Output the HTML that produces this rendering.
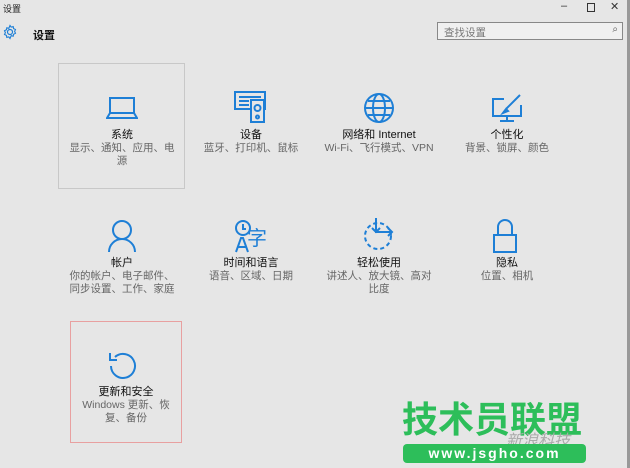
<!DOCTYPE html>
<html><head><meta charset="utf-8"><style>
body{margin:0;width:630px;height:468px;background:#e6e6e6;font-family:"Liberation Sans","Noto Sans CJK SC",sans-serif;position:relative;overflow:hidden}
.a{position:absolute}
.t{position:absolute;width:128px;text-align:center;font-size:10.5px;line-height:13px;color:#666}
.t b{display:block;color:#111;font-weight:normal;font-size:11px}
svg.i{position:absolute;fill:none;stroke:#1e7fd6;stroke-width:2}
</style></head><body>
<div class="a" style="left:3px;top:2px;font-size:9px;color:#222">设置</div>
<div class="a" style="left:561px;top:0;font-size:11px;color:#333">–</div>
<div class="a" style="left:587px;top:3px;width:6px;height:7px;border:1px solid #333"></div>
<div class="a" style="left:610px;top:0;font-size:11px;color:#333">✕</div>
<svg class="a" style="left:2px;top:24px" width="16" height="16" viewBox="0 0 16 16"><circle cx="8" cy="8" r="2.5" fill="none" stroke="#1e7fd6" stroke-width="1.2"/><path d="M8 1.5l1.2 1.6 2-.5.4 2 1.9.9-.9 1.9.9 1.9-1.9.9-.4 2-2-.5L8 14.5l-1.2-1.6-2 .5-.4-2-1.9-.9.9-1.9-.9-1.9 1.9-.9.4-2 2 .5z" fill="none" stroke="#1e7fd6" stroke-width="1.1"/></svg>
<div class="a" style="left:33px;top:27px;font-size:11px;font-weight:bold;color:#111">设置</div>
<div class="a" style="left:437px;top:22px;width:186px;height:18px;border:1px solid #888;background:#f0f0f0;box-sizing:border-box"><span style="position:absolute;left:6px;top:2px;font-size:10.5px;color:#777">查找设置</span><span style="position:absolute;right:4px;top:1px;font-size:10px;color:#555">⌕</span></div>

<div class="a" style="left:58px;top:63px;width:127px;height:126px;border:1px solid #c8c8c8;box-sizing:border-box"></div>
<div class="a" style="left:70px;top:321px;width:112px;height:122px;border:1px solid #e8a0a0;box-sizing:border-box"></div>

<svg class="i" style="left:106px;top:96px" width="32" height="24"><rect x="4" y="2" width="24" height="15"/><path d="M1 22h30l-3-5H4z"/></svg>
<svg class="i" style="left:234px;top:91px" width="34" height="32" stroke-width="1.6"><rect x="1" y="1" width="30" height="17"/><path d="M5 6h22M5 10h10M5 14h10"/><rect x="17" y="9" width="13" height="22" fill="#e6e6e6"/><circle cx="23.5" cy="17" r="3"/><circle cx="23.5" cy="26" r="1.5"/></svg>
<svg class="i" style="left:363px;top:92px" width="32" height="32"><circle cx="16" cy="16" r="14"/><ellipse cx="16" cy="16" rx="6" ry="14"/><path d="M2 16h28M5 9h22M5 23h22"/></svg>
<svg class="i" style="left:491px;top:93px" width="32" height="30"><path d="M13 6H2v17h28V12M9 28h14M16 23v5"/><path d="M29 2L15 16M12 20l3-4 2 2z"/></svg>

<svg class="i" style="left:108px;top:219px" width="28" height="34"><circle cx="14" cy="11" r="9"/><path d="M1 33a13 13 0 0 1 26 0"/></svg>
<svg class="i" style="left:234px;top:219px" width="32" height="34" stroke-width="1.8"><circle cx="9" cy="9" r="7"/><path d="M9 5v5h3"/><path d="M2 33l5-14h2l5 14M4 28h8"/></svg>
<div class="a" style="left:247px;top:228px;font-size:20px;color:#1e7fd6;line-height:22px">字</div>
<svg class="i" style="left:362px;top:220px" width="34" height="32" stroke-dasharray="4 3"><circle cx="16" cy="16" r="13"/></svg>
<svg class="i" style="left:362px;top:216px" width="36" height="30"><path d="M14 2v14h16M26 12l4 4-4 4M10 12l4 4 4-4"/></svg>
<svg class="i" style="left:492px;top:218px" width="26" height="36"><path d="M6 17V9a7 7 0 0 1 14 0v8"/><rect x="2" y="17" width="22" height="17"/></svg>

<svg class="i" style="left:107px;top:349px" width="32" height="32"><path d="M8 8A12 12 0 1 1 4 17"/><path d="M3 4v7h7"/></svg>

<div class="t" style="left:58px;top:129px"><b>系统</b>显示、通知、应用、电<br>源</div>
<div class="t" style="left:187px;top:129px"><b>设备</b>蓝牙、打印机、鼠标</div>
<div class="t" style="left:315px;top:129px"><b>网络和 Internet</b>Wi-Fi、飞行模式、VPN</div>
<div class="t" style="left:443px;top:129px"><b>个性化</b>背景、锁屏、颜色</div>
<div class="t" style="left:58px;top:257px"><b>帐户</b>你的帐户、电子邮件、<br>同步设置、工作、家庭</div>
<div class="t" style="left:187px;top:257px"><b>时间和语言</b>语音、区域、日期</div>
<div class="t" style="left:315px;top:257px"><b>轻松使用</b>讲述人、放大镜、高对<br>比度</div>
<div class="t" style="left:443px;top:257px"><b>隐私</b>位置、相机</div>
<div class="t" style="left:62px;top:386px;text-align:center"><b>更新和安全</b>Windows 更新、恢<br>复、备份</div>

<div class="a" style="left:402px;top:400px;font-size:36px;font-weight:bold;color:#2dbe5a;line-height:40px">技术员联盟</div>
<div class="a" style="left:506px;top:427px;font-size:16px;color:#aaa;font-style:italic">新浪科技</div>
<div class="a" style="left:403px;top:444px;width:183px;height:19px;background:#2dbe5a;border-radius:4px;color:#fff;font-size:14px;font-weight:bold;text-align:center;line-height:19px;letter-spacing:2px">www.jsgho.com</div>
<div class="a" style="left:627px;top:0;width:3px;height:468px;background:#999"></div>
</body></html>
